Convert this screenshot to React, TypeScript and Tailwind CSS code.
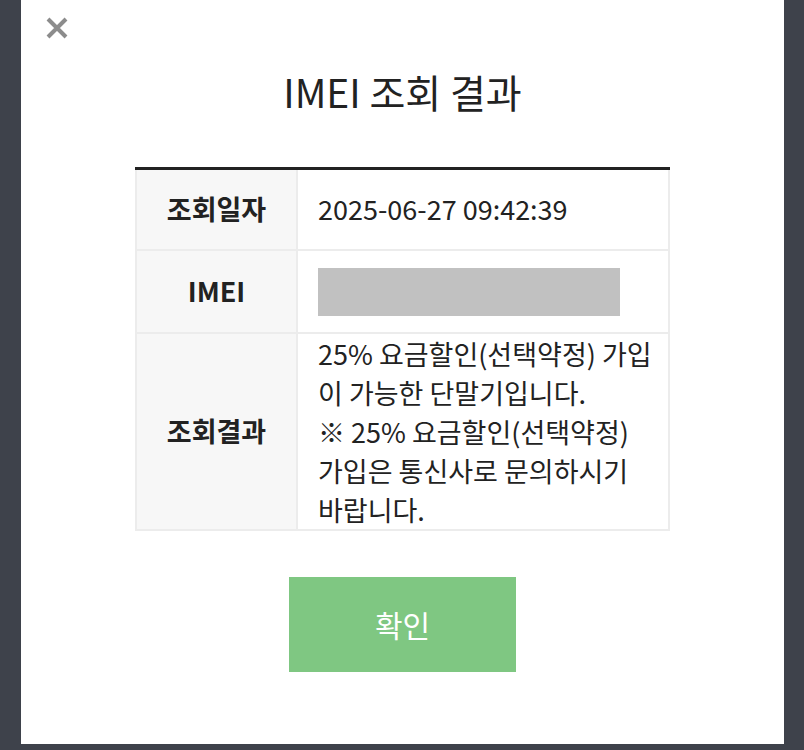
import React from "react";

export default function App() {
  const font = { fontFamily: '"Noto Sans CJK KR", "Noto Sans", sans-serif' };
  return (
    <div className="h-[750px] w-[804px] bg-[#3e424b] overflow-hidden" style={font}>
      <div className="relative ml-[21px] w-[763px] h-[744px] bg-white flex flex-col items-center">
        <button className="absolute left-[22px] top-[14px] w-[28px] h-[28px] flex items-center justify-center">
          <svg width="24" height="24" viewBox="0 0 24 24">
            <path d="M3 3 L21 21 M21 3 L3 21" stroke="#8c8c8c" strokeWidth="4" strokeLinecap="butt" />
          </svg>
        </button>
        <h1 className="mt-[63px] text-[39px] leading-[56px] text-[#222] font-normal">IMEI 조회 결과</h1>
        <div className="mt-[48px] w-[535px] border-t-[3px] border-[#222] text-[27px] text-[#222]">
          <div className="grid grid-cols-[161px_1fr] border-x-2 border-b-2 border-[#ececec] h-[81px]">
            <div className="bg-[#f7f7f7] border-r-2 border-[#ececec] flex items-center justify-center font-bold">조회일자</div>
            <div className="flex items-center pl-[20px]">2025-06-27 09:42:39</div>
          </div>
          <div className="grid grid-cols-[161px_1fr] border-x-2 border-b-2 border-[#ececec] h-[83px]">
            <div className="bg-[#f7f7f7] border-r-2 border-[#ececec] flex items-center justify-center font-bold">IMEI</div>
            <div className="flex items-center pl-[20px]">
              <div className="w-[302px] h-[48px] bg-[#c1c1c1]" />
            </div>
          </div>
          <div className="grid grid-cols-[161px_1fr] border-x-2 border-b-2 border-[#ececec] h-[197px]">
            <div className="bg-[#f7f7f7] border-r-2 border-[#ececec] flex items-center justify-center font-bold">조회결과</div>
            <div className="pl-[20px] leading-[39px] flex items-center whitespace-nowrap">
              <p>
                25% 요금할인(선택약정) 가입
                <br />이 가능한 단말기입니다.
                <br />※ 25% 요금할인(선택약정)
                <br />가입은 통신사로 문의하시기
                <br />바랍니다.
              </p>
            </div>
          </div>
        </div>
        <button className="mt-[46px] w-[227px] h-[95px] bg-[#7fc782] text-white text-[30px] flex items-center justify-center">
          확인
        </button>
      </div>
    </div>
  );
}
